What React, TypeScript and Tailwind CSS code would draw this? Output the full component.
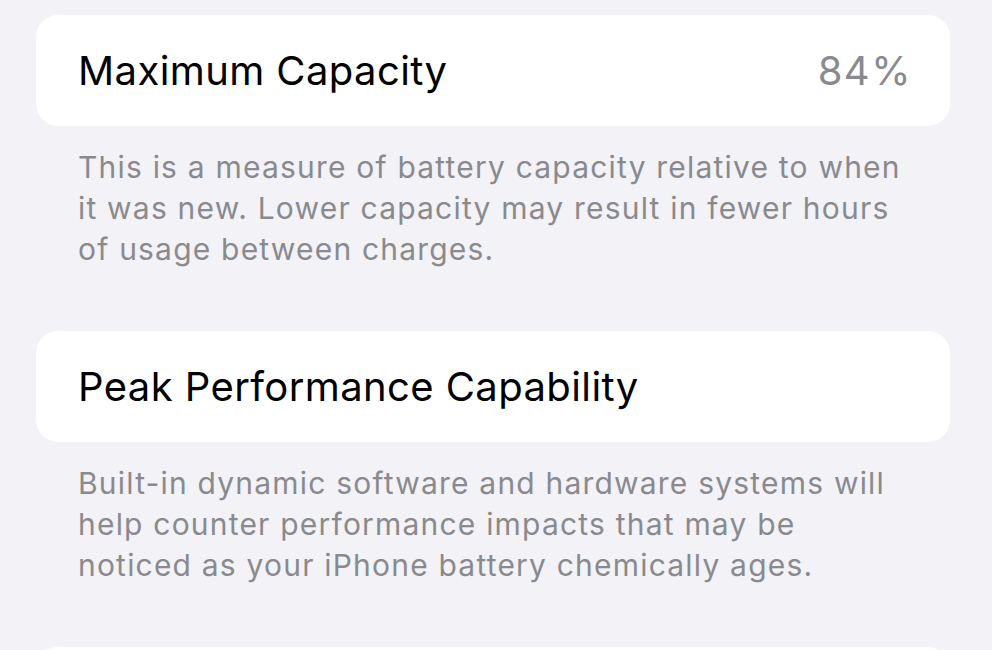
export default function App() {
  const sections = [
    {
      title: 'Maximum Capacity',
      value: '84%',
      note: [
        'This is a measure of battery capacity relative to when',
        'it was new. Lower capacity may result in fewer hours',
        'of usage between charges.',
      ],
    },
    {
      title: 'Peak Performance Capability',
      value: '',
      note: [
        'Built-in dynamic software and hardware systems will',
        'help counter performance impacts that may be',
        'noticed as your iPhone battery chemically ages.',
      ],
    },
  ];

  return (
    <div
      className="w-[992px] h-[650px] overflow-hidden bg-[#f2f2f7] pl-[36px] pr-[42px] pt-[15px] flex flex-col"
      style={{ fontFamily: 'Inter, "Noto Sans", sans-serif' }}
    >
      {sections.map((s) => (
        <div key={s.title} className="flex flex-col">
          <div className="h-[111px] bg-white rounded-[22px] pl-[42px] pr-[38px] flex items-center justify-between">
            <span className="text-[40px] text-black tracking-[0.4px]">{s.title}</span>
            {s.value && <span className="text-[40px] text-[#8a8a8e] tracking-[1.5px]">{s.value}</span>}
          </div>
          <div className="px-[42px] pt-[21px] pb-[61px] text-[30px] leading-[41px] text-[#8a8a8e] tracking-[1.2px] whitespace-nowrap">
            {s.note.map((line) => (
              <div key={line}>{line}</div>
            ))}
          </div>
        </div>
      ))}
      <div className="h-[111px] bg-white rounded-[22px] shrink-0" />
    </div>
  );
}
